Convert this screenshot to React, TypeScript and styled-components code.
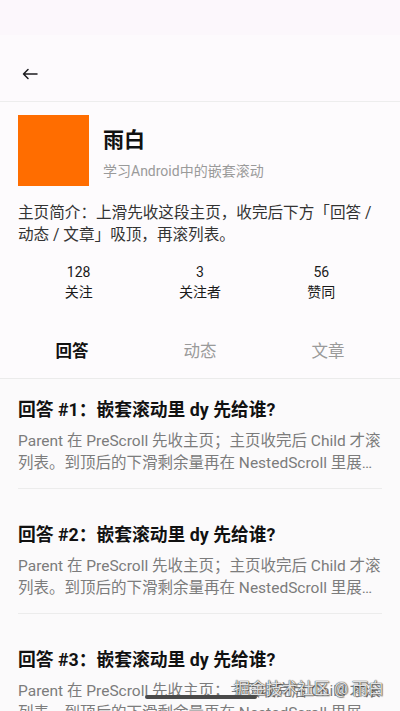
import React from 'react'
import styled, {createGlobalStyle} from 'styled-components'

const GlobalStyle = createGlobalStyle`
  html, body {
    margin: 0;
    padding: 0;
    background: #fdfbfd;
  }
  body {
    font-family: Roboto, "Noto Sans CJK SC", sans-serif;
    -webkit-font-smoothing: antialiased;
  }
`

interface Stat {
    value: string
    label: string
}

const stats: Stat[] = [
    {value: '128', label: '关注'},
    {value: '3', label: '关注者'},
    {value: '56', label: '赞同'},
]

const tabs = ['回答', '动态', '文章']

const answers = [1, 2, 3, 4].map(n => ({
    title: `回答 #${n}：嵌套滚动里 dy 先给谁?`,
    body: 'Parent 在 PreScroll 先收主页；主页收完后 Child 才滚列表。到顶后的下滑剩余量再在 NestedScroll 里展开主页，fling 也按同样的顺序分发。',
}))

function BackArrow() {
    return (
        <svg width="16" height="12" viewBox="0 0 16 12" fill="none">
            <path d="M15 6H1.5M6 1.5L1.5 6L6 10.5" stroke="#1c1b1f" strokeWidth="1.5" strokeLinecap="round" strokeLinejoin="round"/>
        </svg>
    )
}

export default function App() {
    return (
        <Screen>
            <GlobalStyle/>
            <StatusBar/>
            <Toolbar>
                <BackButton aria-label="返回"><BackArrow/></BackButton>
            </Toolbar>

            <Profile>
                <Header>
                    <Avatar/>
                    <NameBlock>
                        <Name>雨白</Name>
                        <Tagline>学习Android中的嵌套滚动</Tagline>
                    </NameBlock>
                </Header>
                <Intro>主页简介：上滑先收这段主页，收完后下方「回答 / 动态 / 文章」吸顶，再滚列表。</Intro>
                <Stats>
                    {stats.map(s => (
                        <StatItem key={s.label}>
                            <StatValue>{s.value}</StatValue>
                            <StatLabel>{s.label}</StatLabel>
                        </StatItem>
                    ))}
                </Stats>
            </Profile>

            <Tabs>
                {tabs.map((t, i) => (
                    <Tab key={t} $active={i === 0}>{t}</Tab>
                ))}
            </Tabs>

            <List>
                {answers.map(a => (
                    <Item key={a.title}>
                        <ItemInner>
                            <ItemTitle>{a.title}</ItemTitle>
                            <ItemBody>{a.body}</ItemBody>
                        </ItemInner>
                    </Item>
                ))}
            </List>

            <Watermark>掘金技术社区 @ 雨白</Watermark>
            <HomeIndicator/>
        </Screen>
    )
}

const Screen = styled.div`
  position: relative;
  width: 400px;
  height: 711px;
  overflow: hidden;
  background: #fdfbfd;
  color: #1c1b1f;
`

const StatusBar = styled.div`
  height: 35px;
  background: #fcf7fc;
`

const Toolbar = styled.div`
  height: 66px;
  display: flex;
  align-items: center;
  padding: 0 16px;
  background: #fdfafd;
  border-bottom: 1px solid #ededed;
  box-sizing: content-box;
`

const BackButton = styled.button`
  display: flex;
  align-items: center;
  justify-content: center;
  width: 28px;
  height: 28px;
  padding: 0;
  border: 0;
  background: none;
  margin-top: 11px;
`

const Profile = styled.section`
  padding: 13px 18px 0;
`

const Header = styled.div`
  display: flex;
  align-items: flex-start;
  gap: 14px;
`

const Avatar = styled.div`
  width: 71px;
  height: 71px;
  flex: none;
  background: #ff6d00;
`

const NameBlock = styled.div`
  display: flex;
  flex-direction: column;
  padding-top: 10px;
`

const Name = styled.div`
  font-size: 21px;
  font-weight: 700;
  line-height: 30px;
  color: #111;
`

const Tagline = styled.div`
  margin-top: 6px;
  font-size: 14px;
  line-height: 20px;
  color: #9a9a9a;
`

const Intro = styled.p`
  margin: 16px 0 0;
  font-size: 15.6px;
  line-height: 22px;
  color: #333;
`

const Stats = styled.div`
  display: grid;
  grid-template-columns: repeat(3, 1fr);
  margin-top: 16px;
`

const StatItem = styled.div`
  display: flex;
  flex-direction: column;
  align-items: center;
  font-size: 14px;
  line-height: 20px;
  color: #1a1a1a;
`

const StatValue = styled.span``

const StatLabel = styled.span``

const Tabs = styled.nav`
  display: grid;
  grid-template-columns: repeat(3, 1fr);
  height: 56px;
  margin-top: 20px;
  padding: 0 8px;
  border-bottom: 1px solid #ebebeb;
  box-shadow: 0 1px 2px rgba(0, 0, 0, 0.03);
`

const Tab = styled.div<{ $active: boolean }>`
  display: flex;
  align-items: center;
  justify-content: center;
  font-size: 16.5px;
  font-weight: ${p => (p.$active ? 700 : 400)};
  color: ${p => (p.$active ? '#111' : '#9a9a9a')};
`

const List = styled.div`
  background: #fbfafb;
`

const Item = styled.article`
  padding: 18px 18px 0;
  margin-bottom: 15px;
`

const ItemInner = styled.div`
  padding-bottom: 14px;
  border-bottom: 1px solid #ececec;
`

const ItemTitle = styled.h3`
  margin: 0;
  font-size: 17.8px;
  font-weight: 700;
  line-height: 26px;
  color: #111;
`

const ItemBody = styled.p`
  margin: 7px 0 0;
  font-size: 15.5px;
  line-height: 22px;
  color: #7c7c7c;
  display: -webkit-box;
  -webkit-line-clamp: 2;
  -webkit-box-orient: vertical;
  overflow: hidden;
`

const Watermark = styled.div`
  position: absolute;
  right: 16px;
  bottom: 12px;
  font-size: 16px;
  line-height: 20px;
  color: rgba(255, 255, 255, 0.85);
  text-shadow: 0 0 1px #444, 0 0 1px #444, 1px 1px 1px rgba(0, 0, 0, 0.4);
  pointer-events: none;
`

const HomeIndicator = styled.div`
  position: absolute;
  left: 145px;
  bottom: 12px;
  width: 112px;
  height: 4px;
  border-radius: 2px;
  background: #4a4a4a;
`
